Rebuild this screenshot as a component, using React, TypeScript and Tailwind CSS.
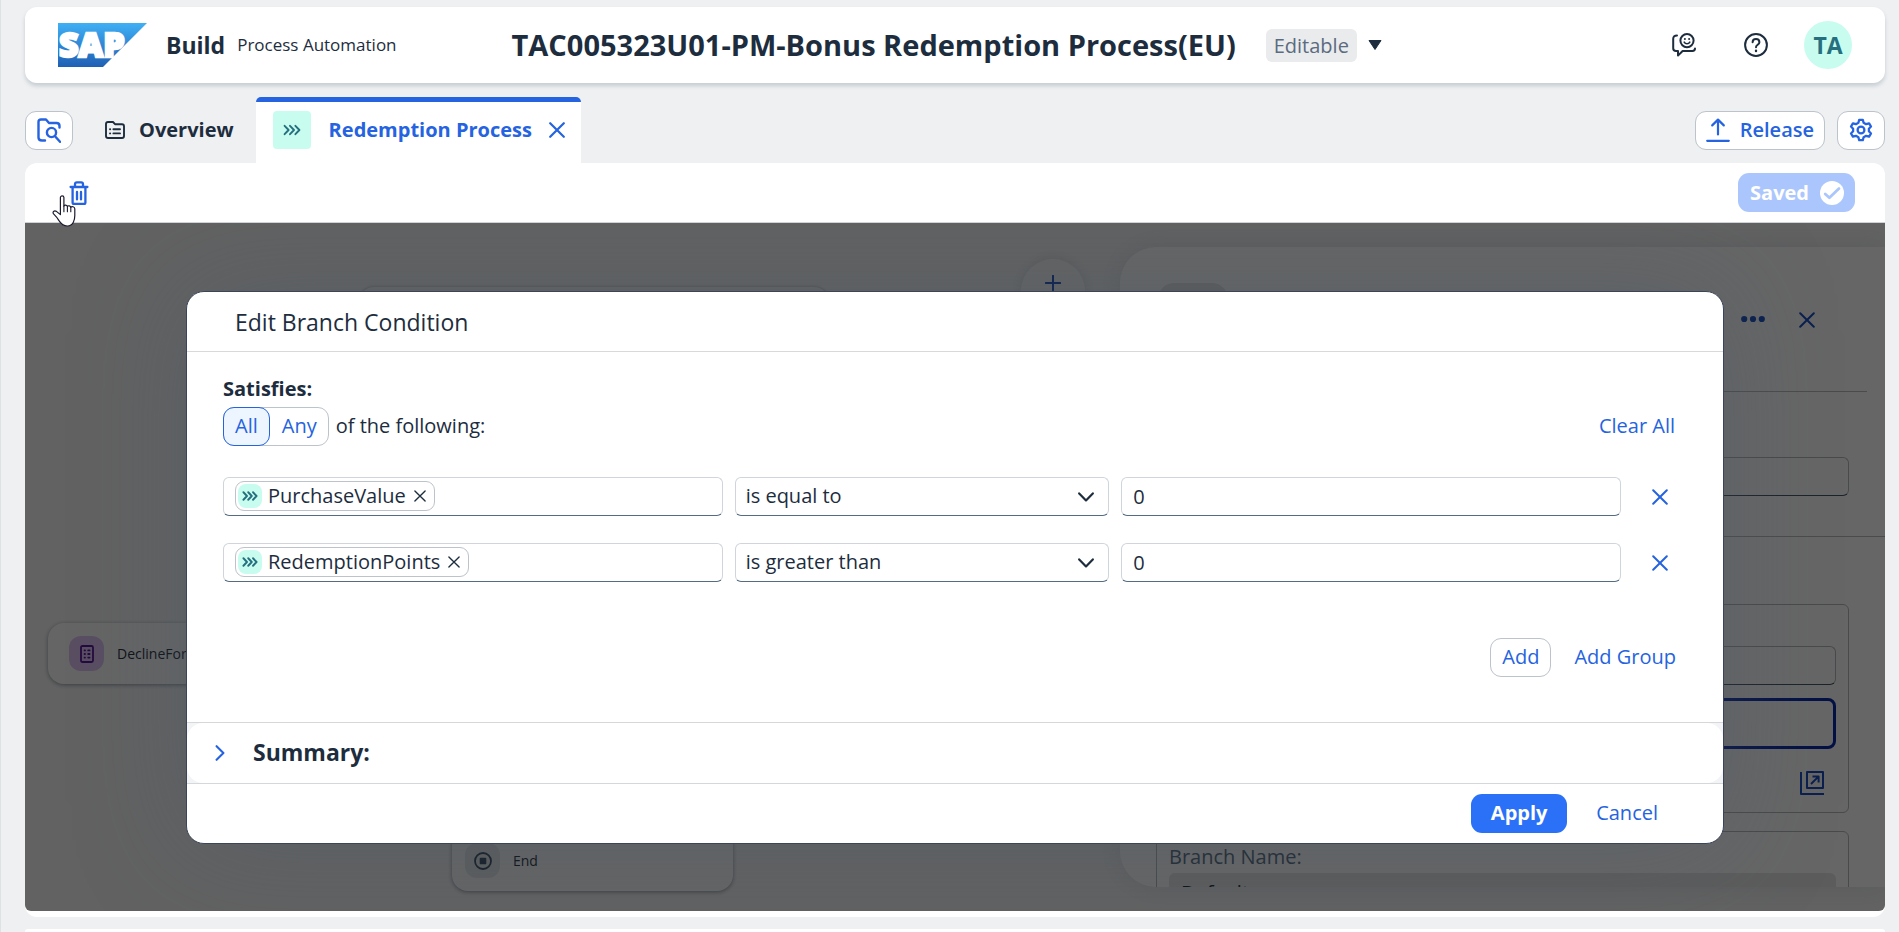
import type { ReactNode } from "react";

type Condition = { id: string; field: string; operator: string; value: string };

const CONDITIONS: Condition[] = [
  { id: "purchase", field: "PurchaseValue", operator: "is equal to", value: "0" },
  { id: "points", field: "RedemptionPoints", operator: "is greater than", value: "0" },
];

const OPERATORS = ["is equal to", "is greater than", "is less than"];

function Icon({ className, box = "0 0 24 24", width = 2, children }: { className: string; box?: string; width?: number; children: ReactNode }) {
  return (
    <svg className={className} viewBox={box} fill="none" stroke="currentColor" strokeWidth={width} strokeLinecap="round" strokeLinejoin="round" aria-hidden="true">
      {children}
    </svg>
  );
}

function CloseIcon({ className, width = 2 }: { className: string; width?: number }) {
  return (
    <Icon className={className} box="0 0 16 16" width={width}>
      <path d="M1.2 1.2 14.8 14.8M14.8 1.2 1.2 14.8" />
    </Icon>
  );
}

function ProcessIcon({ className, width = 1.9 }: { className: string; width?: number }) {
  return (
    <Icon className={className} box="0 0 18 12" width={width}>
      <path d="M1.6 1.8 5.6 6 1.6 10.2M7 1.8 11 6 7 10.2M12.4 1.8 16.4 6 12.4 10.2" />
    </Icon>
  );
}

function SapLogo() {
  return (
    <svg className="h-11 w-[89px] overflow-visible" viewBox="0 0 89 44" role="img" aria-label="SAP">
      <defs>
        <linearGradient id="sap-fill" x1="0" y1="0" x2="0" y2="1">
          <stop offset="0" stopColor="#3fb0f5" />
          <stop offset="1" stopColor="#1f5fb4" />
        </linearGradient>
      </defs>
      <path d="M0 0H89L45 44H0Z" fill="url(#sap-fill)" />
      <text x="1" y="34" className="font-['Open_Sans',sans-serif] font-extrabold" fill="#fff" stroke="#fff" strokeWidth="2.4" fontSize="34">
        SAP
      </text>
    </svg>
  );
}

function Header() {
  return (
    <header className="flex h-[76px] shrink-0 items-center rounded-xl bg-white px-[33px] shadow-[0_3px_4px_#c6cdd2]">
      <SapLogo />
      <span className="ml-[19px] text-[23px] font-bold">Build</span>
      <span className="ml-3 text-[17px]">Process Automation</span>
      <div className="ml-[115px] flex items-center">
        <h1 className="text-[29px] leading-9 font-bold">TAC005323U01-PM-Bonus Redemption Process(EU)</h1>
        <button className="ml-[30px] flex items-center gap-[11px]">
          <span className="rounded-md bg-[#eaebed] px-2 text-xl leading-[33px] text-[#5b6b80]">Editable</span>
          <svg className="h-[10px] w-[14px]" viewBox="0 0 14 10" aria-hidden="true">
            <path d="M1 0.5H13L7 9.5Z" fill="#1d2d3e" stroke="#1d2d3e" strokeLinejoin="round" />
          </svg>
        </button>
      </div>
      <div className="ml-auto flex items-center">
        <button aria-label="Feedback" className="mr-12">
          <Icon className="size-6">
            <path d="M5 2.4C2.6 2.4 1.2 3.4 1.2 5.8V15.2C1.2 17 2 18 4 18H6V22.6L10.6 18H20.4C22 18 23 17 23 15.6" />
            <circle cx="15" cy="7.6" r="6.6" />
            <path d="M12.2 9.2C13.4 11.3 16.6 11.3 17.8 9.2" strokeWidth={1.6} />
            <path d="M12.9 5.9V6M17.1 5.9V6" />
          </Icon>
        </button>
        <button aria-label="Help" className="mr-9">
          <Icon className="size-6">
            <circle cx="12" cy="12" r="10.9" />
            <path d="M8.6 9.2C8.6 4.8 15.4 4.8 15.4 9.2C15.4 11.8 12 11.6 12 14.2" />
            <path d="M12 17.8V18" strokeWidth={2.4} />
          </Icon>
        </button>
        <button aria-label="Profile" className="size-12 rounded-full bg-[#c8fcee] text-[23px] font-bold text-[#256f7f]">TA</button>
      </div>
    </header>
  );
}

function TabBar() {
  const box = "flex h-[39px] items-center justify-center rounded-[11px] border border-[#bcc3ca] bg-white text-[#2563e0]";
  return (
    <div className="mt-[14px] flex h-[66px] shrink-0 items-center">
      <button aria-label="Browse files" className={`${box} w-12`}>
        <Icon className="h-[25px] w-6" box="0 0 24 25" width={2.4}>
          <path d="M8 22.5H5C3 22.5 1.5 21.5 1.5 19.5V4C1.5 2.5 2.5 1.5 4 1.5H9L12 5H19.5C21.5 5 22.5 6 22.5 8V9.5" />
          <circle cx="14.5" cy="14.5" r="4.6" />
          <path d="M18 18.2 23 23.8" />
        </Icon>
      </button>
      <nav className="ml-8 flex h-full items-center">
        <a href="#overview" className="flex items-center gap-[14px] pr-[22px] text-xl font-bold">
          <Icon className="h-[18px] w-5" box="0 0 20 18" width={1.9}>
            <path d="M3 1H8L10 3.2H17C18.3 3.2 19 3.9 19 5.2V15C19 16.3 18.3 17 17 17H3C1.7 17 1 16.3 1 15V3C1 1.7 1.7 1 3 1Z" />
            <path d="M5 8.2H5.2M8.4 8.2H15M5 12.4H5.2M8.4 12.4H15" />
          </Icon>
          Overview
        </a>
        <div className="flex h-full items-center rounded-t-[5px] border-t-[5px] border-[#2563e0] bg-white pr-4 pb-[5px] pl-[17px] text-[#2563e0]">
          <span className="flex h-[38px] w-[38px] items-center justify-center rounded bg-[#c8fcee] text-[#256f7f]">
            <ProcessIcon className="h-3 w-[18px]" />
          </span>
          <a href="#process" className="ml-[18px] text-xl font-bold">Redemption Process</a>
          <button aria-label="Close tab" className="ml-[17px]">
            <CloseIcon className="size-4" width={2.2} />
          </button>
        </div>
      </nav>
      <div className="ml-auto flex gap-3">
        <button className={`${box} gap-[10px] px-[10px] text-xl font-semibold`}>
          <Icon className="size-6" width={2.2}>
            <path d="M12 16.5V1.8M6.2 7.4 12 1.6 17.8 7.4M1.2 22.8H22.8" />
          </Icon>
          Release
        </button>
        <button aria-label="Settings" className={`${box} w-12`}>
          <Icon className="size-6" width={2.3}>
            <path d="M10.2 1.8H13.8L14.6 4.8L17.1 6.2L20.1 5.3L22 8.5L19.9 10.7V13.3L22 15.5L20.1 18.7L17.1 17.8L14.6 19.2L13.8 22.2H10.2L9.4 19.2L6.9 17.8L3.9 18.7L2 15.5L4.1 13.3V10.7L2 8.5L3.9 5.3L6.9 6.2L9.4 4.8Z" />
            <circle cx="12" cy="12" r="3.4" />
          </Icon>
        </button>
      </div>
    </div>
  );
}

function Toolbar() {
  return (
    <div className="relative flex h-[60px] shrink-0 items-center justify-between border-b border-[#d0d3d6] pr-[30px] pl-11">
      <button aria-label="Delete" className="text-[#2563e0]">
        <Icon className="h-6 w-[20px]" box="0 0 20 24" width={2.3}>
          <path d="M1.6 6H18.4M3.6 6V21.4C3.6 22.4 4 22.8 5 22.8H15C16 22.8 16.4 22.4 16.4 21.4V6M6 5.8V3.2C6 2 6.6 1.4 7.8 1.4H12.2C13.4 1.4 14 2 14 3.2V5.8M8 11V18.4M12 11V18.4" />
        </Icon>
      </button>
      <svg className="absolute top-8 left-[27px] z-20 h-8 w-[25px]" viewBox="0 0 25 32" aria-hidden="true">
        <path d="M8.4 2.6C8.4 .4 11.9 .4 11.9 2.6V11.2C12.4 9.4 15.2 9.8 15.4 11.6C16 10.2 18.6 10.6 18.8 12.4C19.8 11 22.6 11.6 22.8 13.8V20.4C22.8 24.4 21.4 31 15.4 31C10.6 31 8.6 28.4 6.8 25.4C5.6 23.2 3.8 21 1.6 18.8C0 17 2.2 15.2 4.4 16.4L8.4 19.6Z" fill="#fff" stroke="#1a1a2e" strokeWidth="1.2" strokeLinejoin="round" />
        <path d="M11.9 11V16.8M15.4 11.8V16.8M18.8 12.8V16.8" stroke="#1a1a2e" strokeWidth="1.1" strokeLinecap="round" />
      </svg>
      <button className="flex h-[39px] items-center gap-[11px] rounded-[11px] bg-[#abc6fd] pr-[11px] pl-3 text-xl font-bold text-white">
        Saved
        <svg className="size-6" viewBox="0 0 24 24" aria-hidden="true">
          <circle cx="12" cy="12" r="12" fill="#fff" />
          <path d="M5.2 13 9.4 16.8 19 7.6" fill="none" stroke="#abc6fd" strokeWidth="2.8" strokeLinecap="round" strokeLinejoin="round" />
        </svg>
      </button>
    </div>
  );
}

function DiagramNode({ place, label, tint, children }: { place: string; label: string; tint: string; children: ReactNode }) {
  return (
    <div className={`absolute flex h-[61px] w-[281px] items-center rounded-2xl bg-[#fdfdfd] shadow-[0_1px_4px_#8f9aa5] ${place}`}>
      <span className={`flex size-[35px] items-center justify-center rounded-xl ${tint}`}>{children}</span>
      <span className="ml-[13px] text-sm">{label}</span>
    </div>
  );
}

function Canvas() {
  return (
    <div className="absolute inset-0 overflow-hidden bg-[#f5f5f5]" inert>
      <div className="absolute top-16 left-[333px] h-24 w-[472px] rounded-2xl bg-[#f8f8f8] shadow-[0_0_3px_#aaa]" />
      <DiagramNode place="top-[400px] left-[23px] pl-[21px]" label="DeclineForm" tint="bg-[#dfc3f5] text-[#5b1a9c]">
        <Icon className="h-[18px] w-3.5" box="0 0 14 18" width={1.8}>
          <path d="M2.5 1H11.5C12.5 1 13 1.5 13 2.5V15.5C13 16.5 12.5 17 11.5 17H2.5C1.5 17 1 16.5 1 15.5V2.5C1 1.5 1.5 1 2.5 1ZM4.6 5.4H5M8.2 5.4H9.6M4.6 9H5M8.2 9H9.6M4.6 12.6H5M8.2 12.6H9.6" />
        </Icon>
      </DiagramNode>
      <DiagramNode place="bottom-5 left-[427px] pl-[13px]" label="End" tint="bg-[#e6e9eb] text-[#354a5f]">
        <Icon className="size-[18px]" box="0 0 18 18" width={1.8}>
          <circle cx="9" cy="9" r="8" />
          <path d="M6.6 6.6H11.4V11.4H6.6Z" fill="currentColor" />
        </Icon>
      </DiagramNode>
      <div className="absolute top-9 left-[996px] flex h-48 w-16 justify-center rounded-full bg-[#fafafa] pt-4 text-[#1b4fc4] shadow-[0_0_12px_#d8dcdf]">
        <Icon className="size-4" box="0 0 16 16">
          <path d="M8 0.8V15.2M0.8 8H15.2" />
        </Icon>
      </div>
      <DetailsPanel />
    </div>
  );
}

function DetailsPanel() {
  return (
    <aside className="absolute inset-y-6 right-0 w-[765px] overflow-hidden rounded-l-[36px] bg-white shadow-[0_0_24px_#dfe3e6]">
      <div className="mr-[18px] flex h-[145px] items-start border-b border-[#bbb] pr-[52px] pl-[38px]">
        <span className="mt-9 h-16 w-[70px] rounded-2xl bg-[#e6e6e6]" />
        <button aria-label="More" className="mt-[68px] ml-auto text-[#1b4fc4]">
          <svg className="h-2 w-6" viewBox="0 0 24 8" fill="currentColor" aria-hidden="true">
            <circle cx="3.2" cy="4" r="3.1" />
            <circle cx="12" cy="4" r="3.1" />
            <circle cx="20.8" cy="4" r="3.1" />
          </svg>
        </button>
        <button aria-label="Close panel" className="mt-[65px] ml-[34px] text-[#1b4fc4]">
          <CloseIcon className="size-4" />
        </button>
      </div>
      <div className="h-[145px] border-b border-[#bbb] px-9 pt-[65px]">
        <input aria-label="Step name" className="h-[39px] w-full rounded-md border border-[#b5b9bd] border-b-[#45586b]" />
      </div>
      <div className="px-9 pt-[67px]">
        <div className="h-[209px] rounded-md border border-[#b5b9bd] px-3 pt-[41px]">
          <input aria-label="Branch" className="h-[39px] w-full rounded-md border border-[#b5b9bd] border-b-[#45586b]" />
          <div className="mt-[13px] h-[51px] rounded-lg border-3 border-[#0a2bac]" />
          <Icon className="mt-[22px] mr-3 ml-auto block size-6 text-[#1b4fc4]" width={2}>
            <path d="M1 1V23H24M7 1H23V17H7ZM11 13 18.4 5.6M12.5 5.4H18.6V11.5" strokeLinecap="butt" />
          </Icon>
        </div>
        <div className="mt-[18px] h-40 rounded-md border border-[#b5b9bd] px-3 pt-[11px]">
          <label htmlFor="branch-name" className="block text-xl leading-7 text-[#556b82]">Branch Name:</label>
          <input id="branch-name" defaultValue="Default" readOnly className="mt-[2px] h-[39px] w-full rounded-md bg-[#e6e6e6] px-3 text-xl" />
        </div>
      </div>
    </aside>
  );
}

function ConditionRow({ item }: { item: Condition }) {
  const field = "h-[39px] w-full min-w-0 rounded-md border border-[#cfd5da] border-b-[#556b82] bg-white";
  return (
    <div className="grid grid-cols-[4fr_3fr_4fr_54px] items-center gap-x-3">
      <div className={`${field} flex items-start pt-[3px] pl-[11px]`}>
        <span className="flex h-[30px] shrink-0 items-center rounded-[9px] border border-[#bcc3ca] pr-2 pl-[2px] text-xl leading-7">
          <span className="flex size-6 items-center justify-center rounded-lg bg-[#c8fcee] text-[#256f7f]">
            <ProcessIcon className="h-3 w-4" width={2.1} />
          </span>
          <span className="ml-[6px]">{item.field}</span>
          <button aria-label={`Remove ${item.field}`} className="ml-2">
            <CloseIcon className="size-3" width={1.8} />
          </button>
        </span>
        <input aria-label={`Field after ${item.field}`} className="min-w-0 flex-1 outline-none" />
      </div>
      <div className="relative">
        <select aria-label={`Operator for ${item.field}`} defaultValue={item.operator} className={`${field} appearance-none px-[10px] text-xl`}>
          {OPERATORS.map((operator) => (
            <option key={operator}>{operator}</option>
          ))}
        </select>
        <Icon className="pointer-events-none absolute top-[15px] right-[15px] h-[10px] w-4" box="0 0 16 10" width={2.2}>
          <path d="M1.2 1.4 8 8.4 14.8 1.4" />
        </Icon>
      </div>
      <input aria-label={`Value for ${item.field}`} defaultValue={item.value} className={`${field} px-[11px] text-xl`} />
      <button aria-label={`Delete condition ${item.field}`} className="flex justify-center pt-px text-[#2563e0]">
        <CloseIcon className="size-4" />
      </button>
    </div>
  );
}

function BranchDialog() {
  return (
    <section role="dialog" aria-labelledby="dialog-title" className="flex w-full flex-col overflow-hidden rounded-[18px] border border-[#3c4557] bg-white shadow-[0_0_110px_rgba(75,90,105,0.4)]">
      <h2 id="dialog-title" className="h-[60px] border-b border-[#d9d9d9] pl-12 text-[23px] leading-[60px]">Edit Branch Condition</h2>
      <div className="px-9 pt-[25px] pb-[45px]">
        <p className="text-xl leading-6 font-bold">Satisfies:</p>
        <div className="mt-[6px] flex h-[39px] items-center">
          <div className="flex h-full rounded-[11px] border border-[#bcc3ca] text-xl text-[#2563e0]">
            <button aria-pressed="true" className="-m-px rounded-[11px] border border-[#2563e0] bg-[#edf6ff] px-[11px]">All</button>
            <button aria-pressed="false" className="pr-[11px] pl-[13px]">Any</button>
          </div>
          <span className="ml-[7px] text-xl">of the following:</span>
          <button className="ml-auto px-3 text-xl text-[#2563e0]">Clear All</button>
        </div>
        <div className="mt-[31px] flex flex-col gap-[27px]">
          {CONDITIONS.map((item) => (
            <ConditionRow key={item.id} item={item} />
          ))}
        </div>
        <div className="mt-14 flex h-[39px] justify-end gap-3 text-xl text-[#2563e0]">
          <button className="rounded-[11px] border border-[#bcc3ca] px-[11px]">Add</button>
          <button className="px-[11px]">Add Group</button>
        </div>
      </div>
      <div className="border-y border-[#d5d8db] bg-[#f3f4f5]">
        <button aria-expanded="false" className="flex h-[60px] w-full items-center rounded-2xl bg-white pl-7 text-[23px] font-bold">
          <Icon className="mr-7 h-4 w-[10px] text-[#2563e0]" box="0 0 10 16" width={2.1}>
            <path d="M1.6 1.2 8.4 8 1.6 14.8" />
          </Icon>
          Summary:
        </button>
      </div>
      <div className="flex h-[59px] items-center justify-end gap-4 pr-[52px] text-xl">
        <button className="h-[39px] w-24 rounded-[11px] bg-[#2a71f7] font-bold text-white">Apply</button>
        <button className="px-[13px] text-[#2563e0]">Cancel</button>
      </div>
    </section>
  );
}

export default function App() {
  return (
    <div className="flex h-screen min-h-[760px] flex-col overflow-hidden border-l border-[#dfe2e4] bg-[#eff0f2] pt-[7px] pr-[14px] pl-6 font-['Open_Sans',sans-serif] text-[#1d2d3e]">
      <Header />
      <TabBar />
      <main className="flex flex-1 flex-col rounded-xl bg-white pb-[6px]">
        <Toolbar />
        <div className="relative flex flex-1 overflow-hidden rounded-b-md">
          <Canvas />
          <div className="relative flex flex-1 items-center bg-black/60 px-[161px]">
            <BranchDialog />
          </div>
        </div>
      </main>
      <div className="mt-3 h-[3px] shrink-0 rounded-t-xl bg-white" />
    </div>
  );
}
